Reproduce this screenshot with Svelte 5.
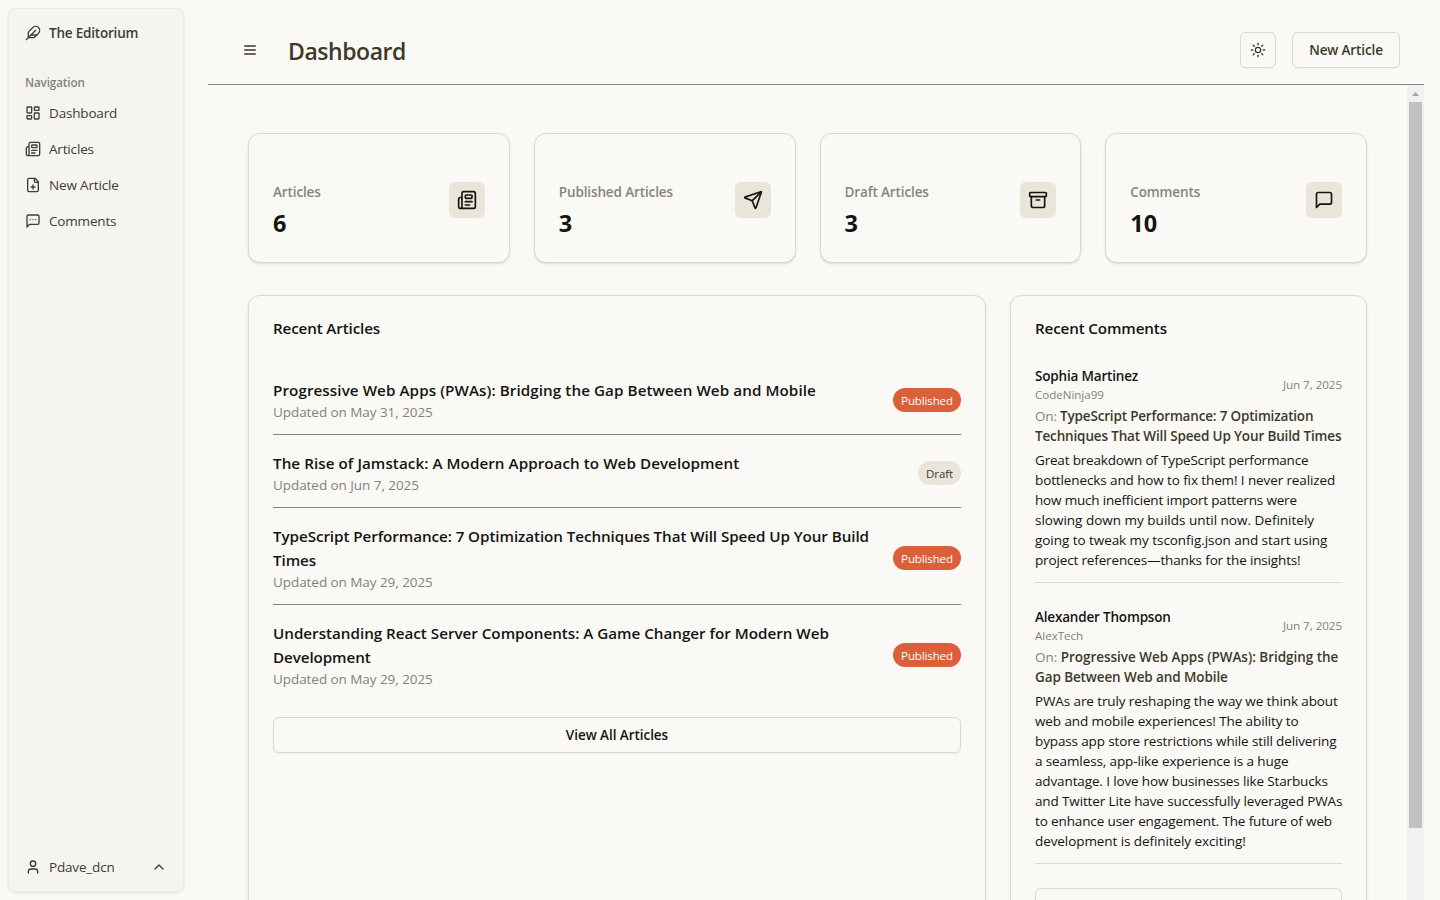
<script>
  const icons = {
    feather: '<path d="M12.67 19a2 2 0 0 0 1.416-.588l6.154-6.172a6 6 0 0 0-8.49-8.49L5.586 9.914A2 2 0 0 0 5 11.328V18a1 1 0 0 0 1 1z"/><path d="M16 8 2 22"/><path d="M17.5 15H9"/>',
    dashboard: '<rect width="7" height="9" x="3" y="3" rx="1"/><rect width="7" height="5" x="14" y="3" rx="1"/><rect width="7" height="9" x="14" y="12" rx="1"/><rect width="7" height="5" x="3" y="16" rx="1"/>',
    newspaper: '<path d="M15 18h-5"/><path d="M18 14h-8"/><path d="M4 22h16a2 2 0 0 0 2-2V4a2 2 0 0 0-2-2H8a2 2 0 0 0-2 2v16a2 2 0 0 1-4 0v-9a2 2 0 0 1 2-2h2"/><rect width="8" height="4" x="10" y="6" rx="1"/>',
    filePlus: '<path d="M15 2H6a2 2 0 0 0-2 2v16a2 2 0 0 0 2 2h12a2 2 0 0 0 2-2V7Z"/><path d="M14 2v4a2 2 0 0 0 2 2h4"/><path d="M9 15h6"/><path d="M12 18v-6"/>',
    messageMore: '<path d="M21 15a2 2 0 0 1-2 2H7l-4 4V5a2 2 0 0 1 2-2h14a2 2 0 0 1 2 2z"/><path d="M8 10h.01"/><path d="M12 10h.01"/><path d="M16 10h.01"/>',
    user: '<path d="M19 21v-2a4 4 0 0 0-4-4H9a4 4 0 0 0-4 4v2"/><circle cx="12" cy="7" r="4"/>',
    chevronUp: '<path d="m18 15-6-6-6 6"/>',
    menu: '<path d="M4 6h16"/><path d="M4 12h16"/><path d="M4 18h16"/>',
    sun: '<circle cx="12" cy="12" r="4"/><path d="M12 2v2"/><path d="M12 20v2"/><path d="m4.93 4.93 1.41 1.41"/><path d="m17.66 17.66 1.41 1.41"/><path d="M2 12h2"/><path d="M20 12h2"/><path d="m6.34 17.66-1.41 1.41"/><path d="m19.07 4.93-1.41 1.41"/>',
    send: '<path d="M14.536 21.686a.5.5 0 0 0 .937-.024l6.5-19a.496.496 0 0 0-.635-.635l-19 6.5a.5.5 0 0 0-.024.937l7.93 3.18a2 2 0 0 1 1.112 1.11z"/><path d="m21.854 2.147-10.94 10.939"/>',
    archive: '<rect width="20" height="5" x="2" y="3" rx="1"/><path d="M4 8v11a2 2 0 0 0 2 2h12a2 2 0 0 0 2-2V8"/><path d="M10 12h4"/>',
    message: '<path d="M21 15a2 2 0 0 1-2 2H7l-4 4V5a2 2 0 0 1 2-2h14a2 2 0 0 1 2 2z"/>'
  };

  const nav = [
    { label: 'Dashboard', icon: 'dashboard' },
    { label: 'Articles', icon: 'newspaper' },
    { label: 'New Article', icon: 'filePlus' },
    { label: 'Comments', icon: 'messageMore' }
  ];

  const stats = [
    { label: 'Articles', value: 6, icon: 'newspaper' },
    { label: 'Published Articles', value: 3, icon: 'send' },
    { label: 'Draft Articles', value: 3, icon: 'archive' },
    { label: 'Comments', value: 10, icon: 'message' }
  ];

  // Each text line is [text, tracking in px].
  const articles = [
    { lines: [['Progressive Web Apps (PWAs): Bridging the Gap Between Web and Mobile', 0.08]], date: 'May 31, 2025', status: 'Published' },
    { lines: [['The Rise of Jamstack: A Modern Approach to Web Development', 0.06]], date: 'Jun 7, 2025', status: 'Draft' },
    { lines: [['TypeScript Performance: 7 Optimization Techniques That Will Speed Up Your Build', -0.07], ['Times', -0.09]], date: 'May 29, 2025', status: 'Published' },
    { lines: [['Understanding React Server Components: A Game Changer for Modern Web', -0.01], ['Development', -0.09]], date: 'May 29, 2025', status: 'Published' }
  ];

  const comments = [
    {
      name: 'Sophia Martinez',
      handle: 'CodeNinja99',
      date: 'Jun 7, 2025',
      on: [['TypeScript Performance: 7 Optimization', -0.18], ['Techniques That Will Speed Up Your Build Times', -0.15]],
      body: [
        ['Great breakdown of TypeScript performance', -0.18],
        ['bottlenecks and how to fix them! I never realized', -0.11],
        ['how much inefficient import patterns were', -0.18],
        ['slowing down my builds until now. Definitely', 0],
        ['going to tweak my tsconfig.json and start using', -0.05],
        ['project references—thanks for the insights!', -0.15]
      ]
    },
    {
      name: 'Alexander Thompson',
      handle: 'AlexTech',
      date: 'Jun 7, 2025',
      on: [['Progressive Web Apps (PWAs): Bridging the', -0.03], ['Gap Between Web and Mobile', -0.1]],
      body: [
        ['PWAs are truly reshaping the way we think about', -0.11],
        ['web and mobile experiences! The ability to', -0.1],
        ['bypass app store restrictions while still delivering', -0.13],
        ['a seamless, app-like experience is a huge', -0.11],
        ['advantage. I love how businesses like Starbucks', -0.13],
        ['and Twitter Lite have successfully leveraged PWAs', -0.13],
        ['to enhance user engagement. The future of web', -0.13],
        ['development is definitely exciting!', -0.08]
      ]
    }
  ];
</script>

{#snippet icon(name, size = 16)}
  <svg width={size} height={size} viewBox="0 0 24 24" fill="none" stroke="currentColor" stroke-width="2" stroke-linecap="round" stroke-linejoin="round" aria-hidden="true">{@html icons[name]}</svg>
{/snippet}

{#snippet textLine([text, tracking])}
  <span class="line" style:letter-spacing="{tracking}px">{text}</span>
{/snippet}

<div class="shell">
  <aside class="sidebar">
    <div class="side-row brand">{@render icon('feather')}<span>The Editorium</span></div>
    <div class="nav-label">Navigation</div>
    <nav>
      {#each nav as item}
        <a class="side-row" href="#top">{@render icon(item.icon)}<span>{item.label}</span></a>
      {/each}
    </nav>
    <div class="side-row account">{@render icon('user')}<span class="grow">Pdave_dcn</span>{@render icon('chevronUp')}</div>
  </aside>

  <main>
    <header>
      <button class="menu" aria-label="Menu">{@render icon('menu')}</button>
      <h1>Dashboard</h1>
      <button class="btn square" aria-label="Theme">{@render icon('sun')}</button>
      <button class="btn new">New Article</button>
    </header>

    <div class="scroller">
      <div class="content">
        <section class="stats">
          {#each stats as s}
            <div class="card stat">
              <div>
                <div class="stat-label">{s.label}</div>
                <div class="stat-value">{s.value}</div>
              </div>
              <div class="stat-icon">{@render icon(s.icon, 20)}</div>
            </div>
          {/each}
        </section>

        <section class="panels">
          <div class="card panel">
            <h2>Recent Articles</h2>
            <div class="articles">
              {#each articles as a}
                <div class="article">
                  <div class="grow">
                    <h3>{#each a.lines as line}{@render textLine(line)}{/each}</h3>
                    <p class="updated">Updated on {a.date}</p>
                  </div>
                  <span class="badge" class:draft={a.status === 'Draft'}>{a.status}</span>
                </div>
              {/each}
            </div>
            <button class="btn full">View All Articles</button>
          </div>

          <div class="card panel">
            <h2>Recent Comments</h2>
            <div class="comments">
              {#each comments as c}
                <div class="comment">
                  <div class="who">
                    <div>
                      <div class="name">{c.name}</div>
                      <div class="small">{c.handle}</div>
                    </div>
                    <div class="small">{c.date}</div>
                  </div>
                  <p class="on"><span class="line" style:letter-spacing="{c.on[0][1]}px"><span class="muted">On:</span>{' '}{c.on[0][0]}</span>{@render textLine(c.on[1])}</p>
                  <p>{#each c.body as line}{@render textLine(line)}{/each}</p>
                </div>
              {/each}
            </div>
            <button class="btn full" aria-label="All comments"></button>
          </div>
        </section>
      </div>

      <div class="scrollbar">
        <div class="arrow"></div>
        <div class="thumb"></div>
      </div>
    </div>
  </main>
</div>

<style>
  :global(body) {
    background: #faf9f5;
    overflow: hidden;
  }
  .shell {
    display: flex;
    box-sizing: border-box;
    width: 1440px;
    height: 900px;
    overflow: hidden;
    background: #faf9f5;
    color: #141413;
    font-family: 'Open Sans', 'Noto Sans', sans-serif;
    font-size: 13.5px;
    line-height: 20px;
    letter-spacing: -0.12px;
  }
  .shell :is(h1, h2, h3, p) {
    margin: 0;
  }
  button {
    font: inherit;
    color: inherit;
    letter-spacing: inherit;
    padding: 0;
  }
  svg {
    flex: none;
    display: block;
  }
  .line {
    display: block;
    white-space: nowrap;
  }
  .grow {
    flex: 1;
    min-width: 0;
  }

  .sidebar {
    display: flex;
    flex-direction: column;
    box-sizing: border-box;
    flex: none;
    width: 176px;
    height: 884px;
    margin: 8px 24px 8px 8px;
    padding: 8px;
    border: 1px solid #ebeae6;
    border-radius: 8px;
    background: #f5f4ef;
    box-shadow: 0 1px 3px rgba(0, 0, 0, 0.1);
    color: #3d3d3a;
  }
  .side-row {
    display: flex;
    align-items: center;
    gap: 8px;
    height: 32px;
    padding: 0 8px;
    color: #3d3d3a;
    text-decoration: none;
    white-space: nowrap;
  }
  nav .side-row,
  .account {
    letter-spacing: -0.17px;
  }
  .brand {
    font-weight: 600;
    letter-spacing: -0.2px;
  }
  .nav-label {
    height: 32px;
    margin-top: 16px;
    padding: 0 8px;
    line-height: 35px;
    font-size: 11.6px;
    font-weight: 600;
    letter-spacing: -0.1px;
    color: #83837f;
  }
  nav {
    display: flex;
    flex-direction: column;
    gap: 4px;
  }
  .account {
    margin-top: auto;
  }

  main {
    display: flex;
    flex-direction: column;
    width: 1216px;
    height: 900px;
  }
  header {
    display: flex;
    align-items: center;
    box-sizing: border-box;
    height: 85px;
    padding: 16px 24px 0 28px;
    border-bottom: 1px solid #83827d;
  }
  .menu {
    display: grid;
    place-items: center;
    width: 28px;
    height: 28px;
    border: 0;
    background: none;
    color: #3d3929;
  }
  h1 {
    flex: 1;
    padding: 1px 0 0 24px;
    font-size: 23px;
    line-height: 32px;
    font-weight: 600;
    letter-spacing: -0.45px;
    color: #3d3929;
  }
  .btn {
    box-sizing: border-box;
    height: 36px;
    border: 1px solid #dad9d4;
    border-radius: 6px;
    background: #faf9f5;
    box-shadow: 0 1px 2px rgba(0, 0, 0, 0.05);
    font-weight: 600;
  }
  .square {
    display: grid;
    place-items: center;
    width: 36px;
    margin-right: 16px;
    color: #3d3929;
  }
  .new {
    width: 108px;
    color: #3d3929;
  }
  .full {
    display: block;
    width: 100%;
    letter-spacing: -0.05px;
  }

  .scroller {
    display: flex;
    height: 815px;
    overflow: hidden;
  }
  .content {
    box-sizing: border-box;
    width: 1199px;
    padding: 48px 40px 0;
  }
  .scrollbar {
    box-sizing: border-box;
    width: 17px;
    height: 815px;
    padding: 0 2px;
    background: #f1f1f1;
  }
  .arrow {
    box-sizing: border-box;
    width: 7px;
    height: 17px;
    margin: 0 auto;
    padding-top: 7px;
  }
  .arrow::before {
    content: '';
    display: block;
    height: 4px;
    background: #a3a3a3;
    clip-path: polygon(50% 0, 100% 100%, 0 100%);
  }
  .thumb {
    height: 726px;
    background: #c1c1c1;
  }

  .card {
    box-sizing: border-box;
    border: 1px solid #dad9d4;
    border-radius: 12px;
    background: #faf9f5;
    box-shadow: 0 1px 3px rgba(0, 0, 0, 0.1), 0 1px 2px -1px rgba(0, 0, 0, 0.1);
  }
  .stats {
    display: grid;
    grid-template-columns: repeat(4, 1fr);
    gap: 24px;
  }
  .stat {
    display: flex;
    justify-content: space-between;
    align-items: flex-start;
    height: 130px;
    padding: 48px 24px 24px;
  }
  .stat-label {
    font-weight: 600;
    color: #85847f;
  }
  .stat-value {
    margin-top: 5px;
    font-size: 23.5px;
    line-height: 32px;
    font-weight: 700;
    letter-spacing: 0;
  }
  .stat-icon {
    display: grid;
    place-items: center;
    width: 36px;
    height: 36px;
    border-radius: 6px;
    background: #e9e5db;
  }

  .panels {
    display: grid;
    grid-template-columns: 738px 357px;
    gap: 24px;
    margin-top: 32px;
  }
  .panel {
    height: 680px;
    padding: 24px;
  }
  h2 {
    font-size: 15.2px;
    line-height: 16px;
    font-weight: 600;
    letter-spacing: -0.14px;
  }
  .articles {
    display: flex;
    flex-direction: column;
    gap: 16px;
    margin: 42px 0 16px;
  }
  .article {
    display: flex;
    align-items: center;
    padding-bottom: 12px;
    border-bottom: 1px solid #83827d;
  }
  .article:last-child {
    border-bottom: 0;
  }
  h3 {
    font-size: 15.2px;
    line-height: 24px;
    font-weight: 600;
  }
  .updated {
    letter-spacing: -0.06px;
    color: #83827d;
  }
  .badge {
    display: flex;
    align-items: center;
    justify-content: center;
    box-sizing: border-box;
    width: 68px;
    height: 24px;
    padding-top: 1px;
    border-radius: 12px;
    background: #db5f39;
    color: #fff;
    font-size: 11.5px;
  }
  .draft {
    width: 43px;
    background: #e9e5db;
    color: #3d3929;
  }

  .comments {
    display: flex;
    flex-direction: column;
    gap: 24px;
    margin: 30px 0 24px;
  }
  .comment {
    display: flex;
    flex-direction: column;
    gap: 4px;
    padding-bottom: 12px;
    border-bottom: 1px solid #dad9d4;
  }
  .who {
    display: flex;
    align-items: center;
    justify-content: space-between;
  }
  .name {
    font-weight: 600;
    letter-spacing: -0.18px;
  }
  .small {
    box-sizing: border-box;
    height: 16px;
    padding-top: 1px;
    font-size: 11.6px;
    line-height: 16px;
    letter-spacing: -0.04px;
    color: #83827d;
  }
  .on {
    font-weight: 600;
    color: #3d3929;
  }
  .muted {
    font-weight: 400;
    color: #83827d;
  }
</style>
